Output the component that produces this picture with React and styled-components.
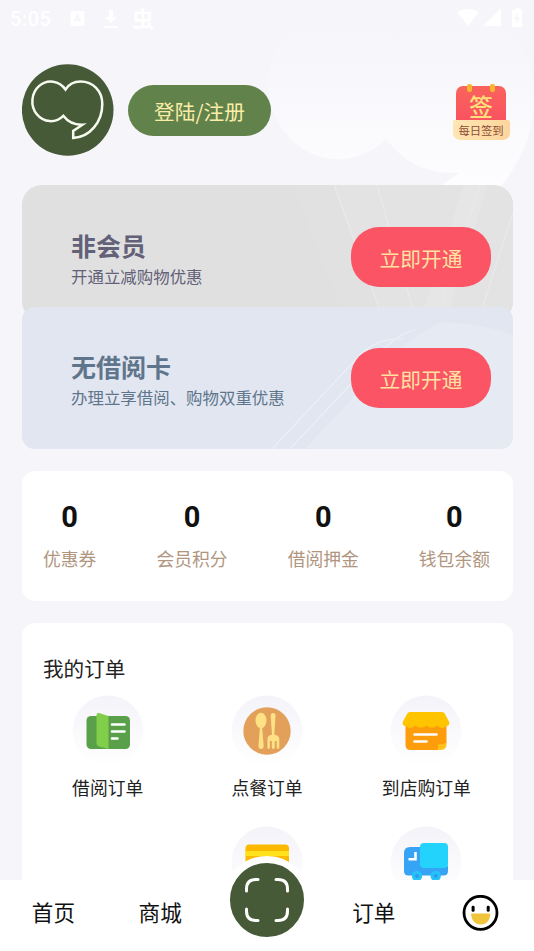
import styled, { createGlobalStyle } from "styled-components";

const GlobalStyle = createGlobalStyle`
  * {
    box-sizing: border-box;
  }
  body {
    margin: 0;
    background: #f5f5fa;
    font-family: "Noto Sans CJK SC", sans-serif;
  }
  button {
    padding: 0;
    border: none;
    font-family: inherit;
    cursor: pointer;
  }
`;

const Screen = styled.div`
  position: relative;
  display: flex;
  flex-direction: column;
  width: 534px;
  height: 951px;
  overflow: hidden;
  background: #f5f5fa;
`;
const Backdrop = styled.svg`
  position: absolute;
  top: -58px;
  left: 229px;
  width: 350px;
  height: 350px;
`;
const StatusBar = styled.div`
  position: relative;
  display: flex;
  align-items: center;
  height: 37px;
  padding: 0 9px 0 10px;
  color: white;
`;
const Clock = styled.span`
  width: 60px;
  font-family: Roboto, sans-serif;
  font-size: 20px;
  font-weight: 500;
  letter-spacing: 0.5px;
`;
const DownloadIcon = styled.svg`
  margin-left: 17px;
`;
const BugMark = styled.span`
  margin: -4px 0 0 13px;
  font-size: 22px;
  line-height: 30px;
  font-weight: 700;
`;
const StatusRight = styled.div`
  display: flex;
  align-items: center;
  margin-left: auto;
`;
const Content = styled.main`
  position: relative;
  flex: 1;
  min-height: 0;
  padding: 27px 21px 0 22px;
  overflow: hidden;
`;
const Header = styled.header`
  display: flex;
  align-items: center;
  height: 92px;
  margin-bottom: 29px;
`;
const Avatar = styled.svg`
  width: 92px;
  height: 92px;
`;
const LoginButton = styled.button`
  width: 143px;
  height: 51px;
  margin-left: 14px;
  border-radius: 26px;
  background: #62824c;
  color: #faeea6;
  font-size: 20.7px;
  line-height: 53px;
`;
const SignIn = styled.div`
  position: relative;
  display: flex;
  flex-direction: column;
  align-items: center;
  width: 58px;
  margin: 5px 3px 0 auto;
`;
const SignTop = styled.div`
  position: relative;
  width: 50px;
  height: 34px;
  border-radius: 7px 7px 0 0;
  background: linear-gradient(#f9635d, #fa5360);
  color: #ffdf79;
  font-size: 24px;
  line-height: 40px;
  font-weight: 500;
  text-align: center;
  &::before,
  &::after {
    content: "";
    position: absolute;
    top: -2px;
    width: 5px;
    height: 8px;
    border-radius: 2px;
    background: #f9b52f;
  }
  &::before {
    left: 11px;
  }
  &::after {
    right: 11px;
  }
`;
const SignLabel = styled.div`
  width: 57px;
  height: 20px;
  border-radius: 2px 2px 7px 7px;
  background: linear-gradient(100deg, #ffe6b4, #fdd59c);
  color: #8d4d35;
  font-size: 11.3px;
  line-height: 20px;
  text-align: center;
`;
const MemberCard = styled.section`
  position: relative;
  display: flex;
  align-items: center;
  height: ${(p) => (p.$card ? "142px" : "136px")};
  margin-top: ${(p) => (p.$card ? "-14px" : "0")};
  padding: 0 22px 0 49px;
  border-radius: ${(p) => (p.$card ? "13px" : "20px")};
  background: ${(p) => (p.$card ? "#e1e6f1" : "#e0e0e0")};
  color: ${(p) => (p.$card ? "#5f758b" : "#636178")};
  overflow: hidden;
`;
const CardArt = styled.svg`
  position: absolute;
  top: 0;
  right: 0;
  width: 245px;
  height: 142px;
`;
const CardText = styled.div`
  position: relative;
  flex: 1;
  padding-top: ${(p) => p.$drop}px;
`;
const CardTitle = styled.h2`
  margin: 0;
  font-size: 25px;
  line-height: 34px;
  font-weight: 700;
`;
const CardNote = styled.p`
  margin: 1px 0 0;
  font-size: 16.45px;
  line-height: 26px;
  white-space: nowrap;
`;
const OpenButton = styled.button`
  position: relative;
  width: 140px;
  height: 60px;
  margin-top: ${(p) => p.$shift}px;
  border-radius: 28px;
  background: #fa5465;
  color: #ffe2a2;
  font-size: 20.7px;
  line-height: 62px;
`;
const Stats = styled.section`
  display: flex;
  justify-content: space-between;
  height: 130px;
  margin-top: 22px;
  padding: 28px 23px 0 21px;
  border-radius: 13px;
  background: white;
`;
const Stat = styled.div`
  text-align: center;
`;
const StatValue = styled.div`
  color: #111;
  font-family: Roboto, sans-serif;
  font-size: 29px;
  line-height: 36px;
  font-weight: 700;
`;
const StatLabel = styled.div`
  margin-top: 9px;
  color: #b0967f;
  font-size: 17.8px;
  line-height: 28px;
`;
const Orders = styled.section`
  height: 330px;
  margin-top: 22px;
  padding: 30px 7px 0 6px;
  border-radius: 13px;
  background: white;
`;
const OrdersTitle = styled.h3`
  margin: 0 0 12px 15px;
  color: #222;
  font-size: 20.6px;
  line-height: 30px;
  font-weight: 400;
`;
const OrderGrid = styled.div`
  display: grid;
  grid-template-columns: repeat(3, 1fr);
  grid-auto-rows: 131px;
`;
const OrderItem = styled.div`
  display: flex;
  flex-direction: column;
  align-items: center;
  color: #222;
  font-size: 17.8px;
  line-height: 28px;
  svg {
    width: 72px;
    height: 72px;
    margin-bottom: 6px;
  }
`;
const TabBar = styled.nav`
  position: relative;
  display: grid;
  grid-template-columns: repeat(5, 1fr);
  height: 71px;
  background: white;
`;
const Tab = styled.div`
  display: flex;
  justify-content: center;
  align-items: center;
  height: 62px;
  color: #111;
  font-size: 21.6px;
  svg {
    margin-top: 4px;
  }
`;
const ScanButton = styled.button`
  position: absolute;
  top: -24px;
  left: 50%;
  display: flex;
  justify-content: center;
  align-items: center;
  width: 88px;
  height: 88px;
  margin-left: -44px;
  border: 7px solid white;
  border-radius: 50%;
  background: #465a38;
`;

const LOGO =
  "M43.5 25.5A18.4 19.8 0 1 0 41.3 51.8C46 58 52 61 60.5 60.7L51.2 67V74C68 73 80.3 58 80.3 40C80.3 27 71 17.5 58.5 17.5C52 17.5 47 20 43.5 25.5Z";

function Disc({ id, children }) {
  return (
    <svg viewBox="0 0 72 72">
      <defs>
        <linearGradient id={id} x1="0" y1="0" x2="0" y2="1">
          <stop offset="0" stopColor="#f4f3f9" />
          <stop offset="1" stopColor="#fff" />
        </linearGradient>
      </defs>
      <circle cx="36" cy="36" r="35.5" fill={`url(#${id})`} />
      {children}
    </svg>
  );
}

const BookIcon = () => (
  <Disc id="book">
    <rect x="14.5" y="21" width="43.5" height="33" rx="4.5" fill="#5aa04a" />
    <path d="M24.5 20Q24.5 17.5 27 18L36.5 21V54L27 51.5Q24.5 50.8 24.5 48Z" fill="#80ce4a" />
    <path d="M40 29.5H52.5M40 36.5H52.5M40 43.5H45.5" stroke="#fff" strokeWidth="2.6" strokeLinecap="round" />
  </Disc>
);

const MealIcon = () => (
  <Disc id="meal">
    <circle cx="36" cy="36" r="23.7" fill="#e3a05b" />
    <g fill="#fde184">
      <ellipse cx="30" cy="25.5" rx="5.5" ry="7.8" />
      <path d="M29 31H31L32.7 51Q32.6 54 30.1 54Q27.5 54 27.5 51Z" />
      <path d="M39.6 20.5Q39.6 18 42 18Q44.5 18 44.5 20.5L43.3 39.5Q48.3 40.5 48.3 44V52Q48.3 54 47 54Q45.7 54 45.7 52V46H43.8V52Q43.8 54 42.3 54Q40.8 54 40.8 52V46H38.9V52Q38.9 54 37.7 54Q36.4 54 36.4 52V44Q36.4 40.5 41 39.5Z" />
    </g>
  </Disc>
);

const ShopIcon = () => (
  <Disc id="shop">
    <path d="M15.5 28H56.5V48L49.5 55H20.5Q15.5 55 15.5 50Z" fill="#fe9d0b" />
    <path d="M56.5 47.5V49Q56.5 55 50 55H47.5Q48.5 53 47.7 49.5Q53 49.7 56.5 47.5Z" fill="#ffc21a" />
    <path d="M20 17H52Q54 17 55 19L59.2 27Q60 31 56 31.2Q52 35 47 30.5Q42 35 36.5 30.5Q31 35 25.5 30.5Q20 35 16 31.2Q12 31 12.8 27L17 19Q18 17 20 17Z" fill="#ffc400" />
    <path d="M24.5 39.5H46.5M24.5 46.5H36.5" stroke="#fff" strokeWidth="2.6" strokeLinecap="round" />
  </Disc>
);

const WalletIcon = () => (
  <Disc id="wallet">
    <rect x="14.5" y="18.5" width="43.5" height="34" rx="4" fill="#fdb900" />
    <path d="M14.5 25H58V30H14.5Z" fill="#ffe11c" />
  </Disc>
);

const TruckIcon = () => (
  <Disc id="truck">
    <path d="M20 21H32V40H58V45Q58 49.5 53.5 49.5H18.5Q14 49.5 14 45V27Q14 21 20 21Z" fill="#36a3f4" />
    <rect x="30" y="17" width="28" height="25" rx="4" fill="#24d3fb" />
    <path d="M25.5 26V33.2H18.5" fill="none" stroke="#fff" strokeWidth="2.6" />
    <circle cx="27" cy="50" r="5.2" fill="#24c4f8" />
    <circle cx="45.7" cy="50" r="5.2" fill="#24c4f8" />
    <circle cx="27" cy="50" r="2" fill="#3597ed" />
    <circle cx="45.7" cy="50" r="2" fill="#3597ed" />
  </Disc>
);

const SmileIcon = () => (
  <svg width="37" height="37" viewBox="0 0 37 37">
    <circle cx="18.5" cy="17.8" r="16.5" fill="#fff" stroke="#000" strokeWidth="2.8" />
    <rect x="9.6" y="10.8" width="3" height="6" rx="1.4" />
    <rect x="24.7" y="10.8" width="3" height="6" rx="1.4" />
    <path d="M10 18.5H27.5Q28.5 18.5 28.3 20Q27 29.5 18.8 29.5Q10.5 29.5 9 20Q8.8 18.5 10 18.5Z" fill="#f0c53c" />
  </svg>
);

const stats = ["优惠券", "会员积分", "借阅押金", "钱包余额"];

const orders = [
  { label: "借阅订单", Icon: BookIcon },
  { label: "点餐订单", Icon: MealIcon },
  { label: "到店购订单", Icon: ShopIcon },
  { label: "", Icon: null },
  { label: "", Icon: WalletIcon },
  { label: "", Icon: TruckIcon },
];

export default function App() {
  return (
    <>
      <GlobalStyle />
      <Screen>
        <Backdrop viewBox="0 0 92 92">
          <defs>
            <linearGradient id="fade" x1="0" y1="0" x2="0" y2="1">
              <stop offset="0.1" stopColor="#fcfcff" stopOpacity="0.1" />
              <stop offset="0.8" stopColor="#fdfdff" />
            </linearGradient>
          </defs>
          <path d={LOGO} fill="url(#fade)" />
        </Backdrop>
        <StatusBar>
          <Clock>5:05</Clock>
          <svg width="16" height="17" viewBox="0 0 16 17">
            <rect x="0.5" y="1" width="14" height="15" rx="1.5" fill="#fff" />
            <path d="M4.5 12L7.5 5L10.5 12M5.5 10H9.5" fill="none" stroke="#f5f5fa" strokeWidth="1.5" />
          </svg>
          <DownloadIcon width="16" height="20" viewBox="0 0 16 20">
            <path d="M6 1H10V8H14L8 14L2 8H6ZM1 17H15V19H1Z" fill="#fff" />
          </DownloadIcon>
          <BugMark>虫</BugMark>
          <StatusRight>
            <svg width="70" height="22" viewBox="0 0 70 22" fill="#fff">
              <path d="M2 4Q13 -2 24 4L13 18Z" />
              <path d="M46 0V18H28Z" />
              <path d="M59.5 1.5H61V-0.5H64.5V1.5H67V19H57V3Q57 1.5 59.5 1.5Z" />
              <path d="M63 4L59 11H61.3V16L65 9H62.5Z" fill="#f5f5fa" />
            </svg>
          </StatusRight>
        </StatusBar>
        <Content>
          <Header>
            <Avatar viewBox="0 0 92 92">
              <circle cx="45.7" cy="46" r="45.8" fill="#465a38" />
              <path d={LOGO} fill="none" stroke="#f7faef" strokeWidth="2.5" />
            </Avatar>
            <LoginButton>登陆/注册</LoginButton>
            <SignIn>
              <SignTop>签</SignTop>
              <SignLabel>每日签到</SignLabel>
            </SignIn>
          </Header>
          <MemberCard>
            <CardArt viewBox="0 0 245 142">
              <path d="M26 0H245V142H80Z" fill="#e3e3e3" />
              <path d="M66 0L118 142H80L26 0Z" fill="#e1e1e1" />
              <path d="M220 0L175 142H150L196 0Z" fill="#e6e6e6" />
              <path d="M66 0L118 142M109 0L150 142M212 0L166 142M245 28L208 142" fill="none" stroke="#e9e9e9" strokeWidth="1.3" />
            </CardArt>
            <CardText $drop={11}>
              <CardTitle>非会员</CardTitle>
              <CardNote>开通立减购物优惠</CardNote>
            </CardText>
            <OpenButton $shift={7}>立即开通</OpenButton>
          </MemberCard>
          <MemberCard $card>
            <CardArt viewBox="0 0 245 142">
              <path d="M37 142L126 46Q166 15 176 15Q217 17 245 28V142Z" fill="#e5eaf3" />
              <path d="M4 142L92 48Q110 30 136 32M22 142L108 50Q132 24 149 23" fill="none" stroke="#ebeff6" strokeWidth="1.2" />
            </CardArt>
            <CardText $drop={2}>
              <CardTitle>无借阅卡</CardTitle>
              <CardNote>办理立享借阅、购物双重优惠</CardNote>
            </CardText>
            <OpenButton $shift={0}>立即开通</OpenButton>
          </MemberCard>
          <Stats>
            {stats.map((label) => (
              <Stat key={label}>
                <StatValue>0</StatValue>
                <StatLabel>{label}</StatLabel>
              </Stat>
            ))}
          </Stats>
          <Orders>
            <OrdersTitle>我的订单</OrdersTitle>
            <OrderGrid>
              {orders.map(({ label, Icon }, i) => (
                <OrderItem key={i}>
                  {Icon && <Icon />}
                  {label}
                </OrderItem>
              ))}
            </OrderGrid>
          </Orders>
        </Content>
        <TabBar>
          <Tab>首页</Tab>
          <Tab>商城</Tab>
          <Tab />
          <Tab>订单</Tab>
          <Tab>
            <SmileIcon />
          </Tab>
          <ScanButton>
            <svg width="46" height="46" viewBox="0 0 46 46" fill="none" stroke="#fff" strokeWidth="3" strokeLinecap="round">
              <path d="M2.5 14V12Q2.5 2.5 12 2.5H14M32 2.5H34Q43.5 2.5 43.5 12V14M43.5 32V34Q43.5 43.5 34 43.5H32M14 43.5H12Q2.5 43.5 2.5 34V32" />
            </svg>
          </ScanButton>
        </TabBar>
      </Screen>
    </>
  );
}
